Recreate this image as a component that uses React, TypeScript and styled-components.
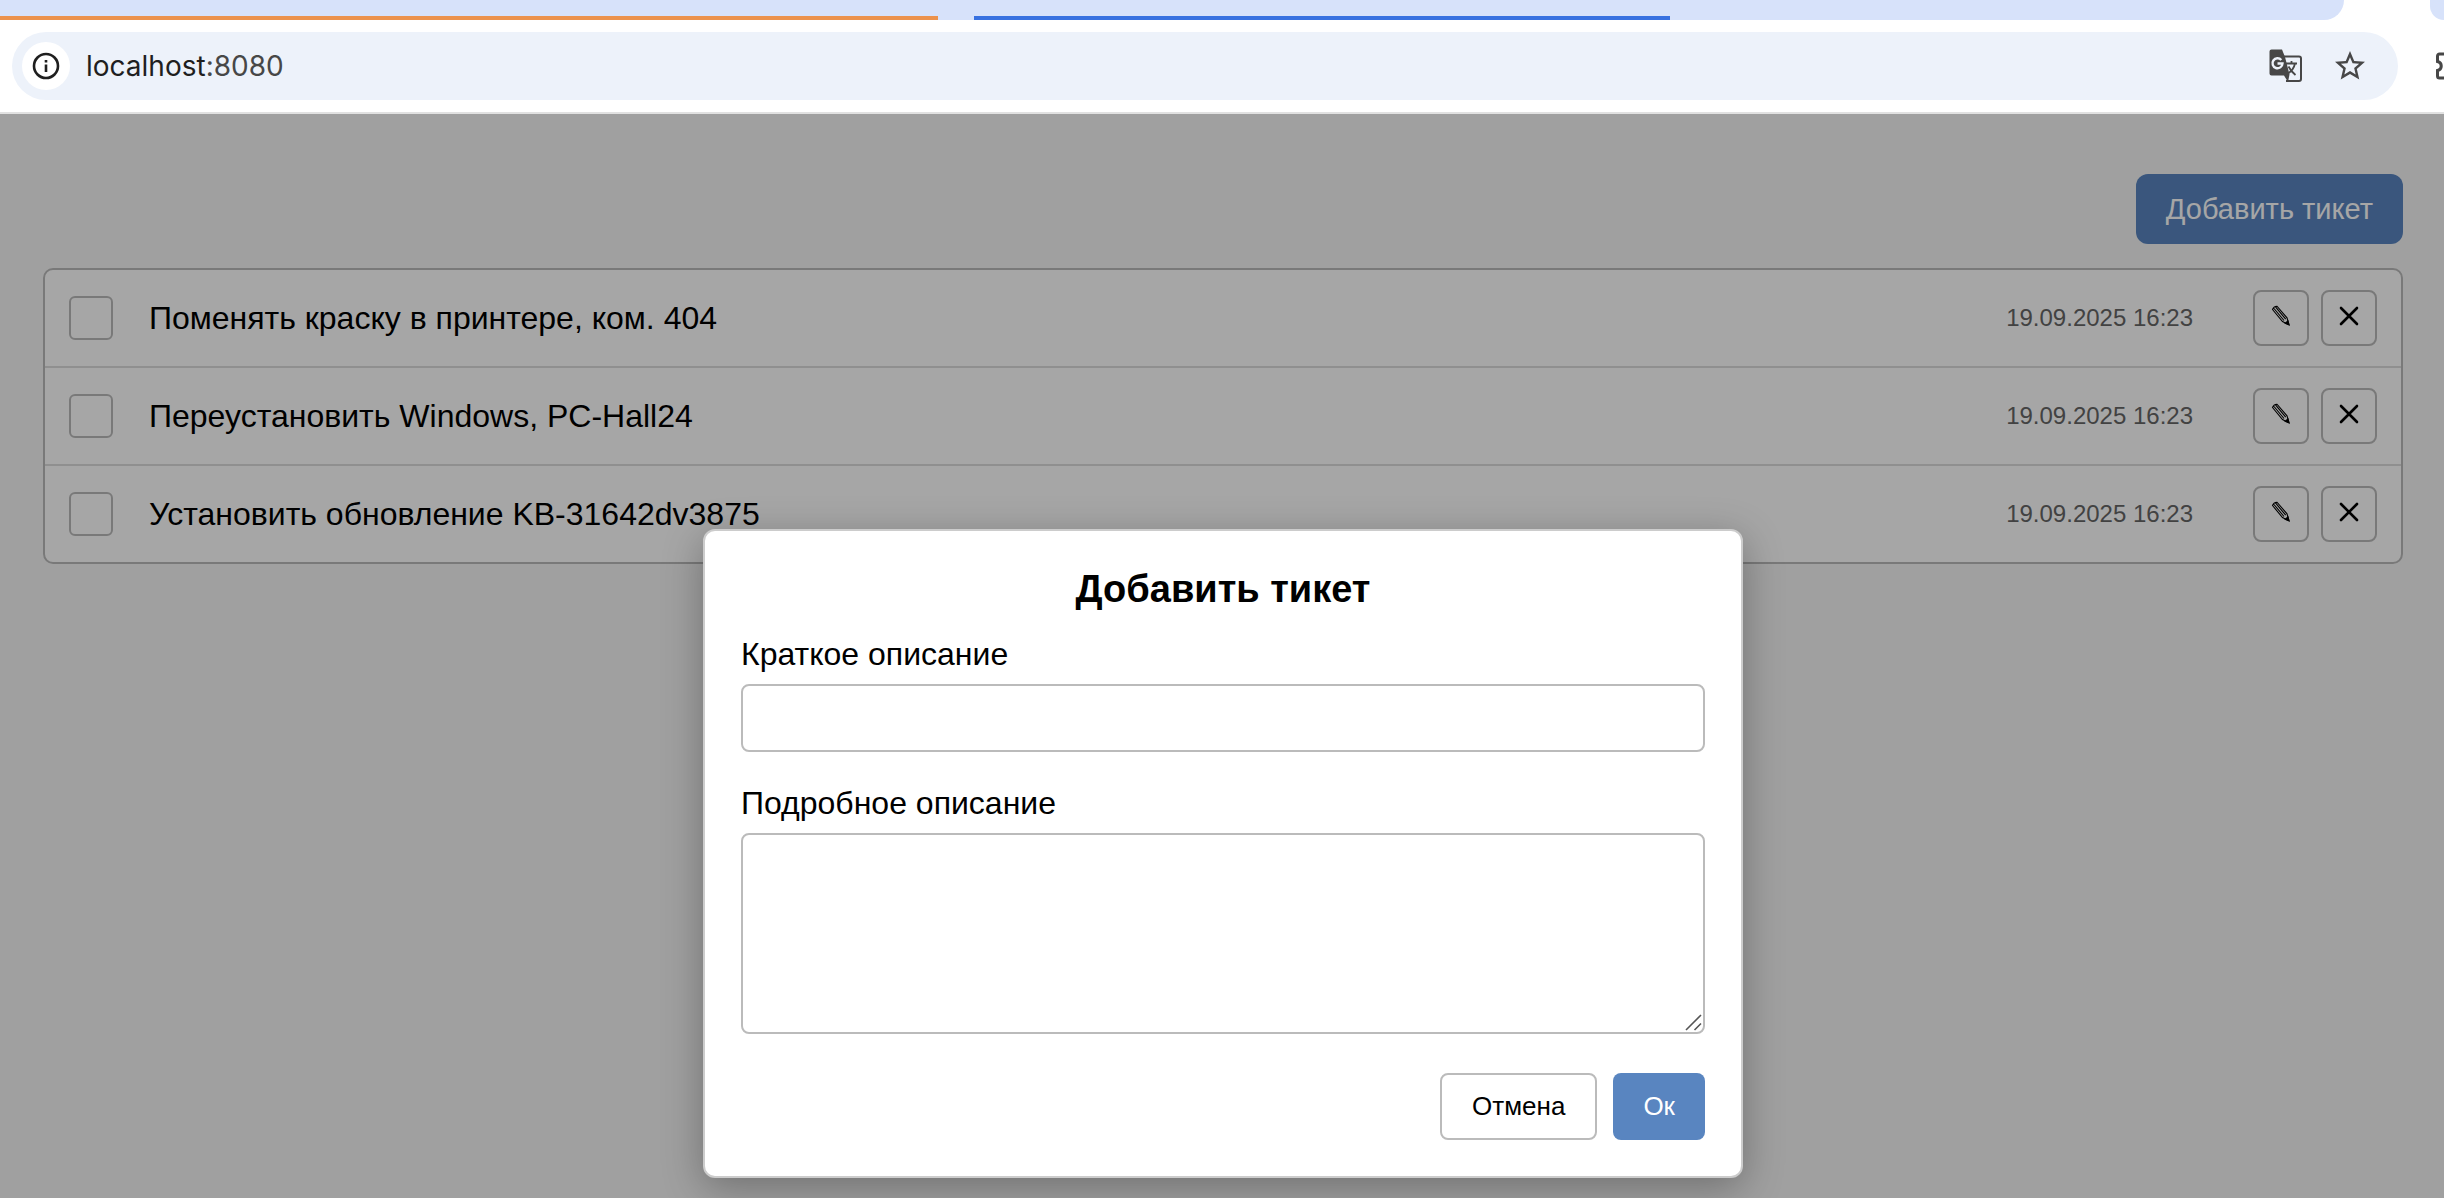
import React from "react";
import styled, { createGlobalStyle } from "styled-components";

const GlobalStyle = createGlobalStyle`
  *, *::before, *::after { box-sizing: border-box; }
  html, body, #root { height: 100%; }
  body {
    margin: 0;
    background: #fff;
    color: #000;
    font-family: "Liberation Sans", Arial, sans-serif;
    font-size: 32px;
    line-height: 36px;
  }
  button, input, textarea { font-family: inherit; margin: 0; }
`;

const Window = styled.div`
  display: flex;
  flex-direction: column;
  min-height: 100vh;
`;

const TabStrip = styled.div`
  display: flex;
  justify-content: space-between;
  height: 20px;
  overflow: hidden;
`;

const TabGroup = styled.div`
  display: flex;
  align-items: flex-end;
  gap: 36px;
  flex: 0 1 2344px;
  background: #d7e2fa;
  border-bottom-right-radius: 24px;
`;

const TabLine = styled.span<{ $color: string; $width: number }>`
  flex: 0 1 ${(p) => p.$width}px;
  height: 4px;
  background: ${(p) => p.$color};
`;

const TabEdge = styled.div`
  width: 14px;
  background: #d7e2fa;
  border-bottom-left-radius: 24px;
`;

const Toolbar = styled.header`
  display: flex;
  align-items: center;
  gap: 36px;
  height: 94px;
  padding-left: 12px;
  border-bottom: 2px solid #e1e1e1;
  overflow: hidden;
`;

const AddressBar = styled.div`
  display: flex;
  align-items: center;
  flex: 1;
  height: 68px;
  padding: 0 30px 0 10px;
  border-radius: 34px;
  background: #edf2fa;
`;

const ChromeButton = styled.button`
  display: flex;
  align-items: center;
  justify-content: center;
  width: 36px;
  height: 36px;
  padding: 0;
  border: 0;
  background: none;
  color: #474747;
`;

const InfoButton = styled(ChromeButton)`
  width: 48px;
  height: 48px;
  border-radius: 50%;
  background: #fff;
  color: #1f1f1f;
`;

const Address = styled.div`
  flex: 1;
  padding-left: 16px;
  font-family: Inter, Roboto, sans-serif;
  font-size: 28px;
  color: #1f1f1f;
`;

const Port = styled.span`
  color: #474747;
`;

const AddressActions = styled.div`
  display: flex;
  gap: 28px;
`;

const Extensions = styled.div`
  flex: 0 0 10px;
  height: 32px;
  overflow: hidden;
  color: #474747;
`;

const Page = styled.main`
  position: relative;
  flex: 1;
  padding: 60px 41px 0 43px;
  background: #f6f6f6;
`;

const Actions = styled.div`
  display: flex;
  justify-content: flex-end;
  margin-bottom: 24px;
`;

const PrimaryButton = styled.button`
  padding: 0 30px;
  border: 0;
  background: #5985c0;
  color: #fff;
  height: 67px;
  font-size: 26px;
  border-radius: 8px;
`;

const AddButton = styled(PrimaryButton)`
  height: 70px;
  font-size: 29px;
  border-radius: 12px;
`;

const TicketList = styled.ul`
  margin: 0;
  padding: 0;
  list-style: none;
  background: #fff;
  border: 2px solid #bbb;
  border-radius: 10px;
`;

const Ticket = styled.li`
  display: flex;
  align-items: center;
  padding: 20px 24px;
  & + & { border-top: 2px solid #dcdcdc; }
`;

const TicketLabel = styled.label`
  display: flex;
  align-items: center;
  gap: 36px;
  flex: 1;
`;

const Check = styled.input`
  appearance: none;
  width: 44px;
  height: 44px;
  margin: 0;
  border: 2px solid #bbb;
  border-radius: 6px;
`;

const Created = styled.time`
  margin-right: 60px;
  font-size: 24px;
  color: #666;
`;

const RowButtons = styled.div`
  display: flex;
  gap: 12px;
`;

const IconButton = styled.button`
  display: flex;
  align-items: center;
  justify-content: center;
  width: 56px;
  height: 56px;
  padding: 0 0 4px;
  border: 2px solid #bbb;
  border-radius: 8px;
  background: transparent;
  color: #000;
`;

const Overlay = styled.div`
  position: absolute;
  inset: 0;
  display: flex;
  align-items: flex-end;
  justify-content: center;
  padding: 0 0 20px 2px;
  background: rgba(0, 0, 0, 0.35);
  overflow: hidden;
`;

const Dialog = styled.form`
  display: flex;
  flex-direction: column;
  width: 1040px;
  max-width: 100%;
  padding: 36px;
  border: 2px solid #ccc;
  border-radius: 12px;
  background: #fff;
  box-shadow: 0 10px 40px rgba(0, 0, 0, 0.3);
`;

const DialogTitle = styled.h2`
  margin: 0 0 24px;
  text-align: center;
  font-size: 38px;
  line-height: 45px;
`;

const Field = styled.label`
  display: flex;
  flex-direction: column;
  gap: 12px;
  margin-bottom: 33px;
`;

const TextInput = styled.input`
  height: 68px;
  padding: 0 16px;
  border: 2px solid #bbb;
  border-radius: 8px;
  background: #fff;
  font-size: 28px;
`;

const TextBox = styled.textarea`
  display: block;
  height: 201px;
  padding: 12px 16px;
  border: 2px solid #bbb;
  border-radius: 8px;
  background: #fff;
  font-size: 28px;
  resize: none;
`;

const TextBoxFrame = styled.span`
  position: relative;
  display: flex;
  flex-direction: column;
`;

const Grip = styled.svg`
  position: absolute;
  right: 2px;
  bottom: 2px;
`;

const DialogButtons = styled.div`
  display: flex;
  justify-content: flex-end;
  gap: 16px;
  padding-top: 6px;
`;

const CancelButton = styled(PrimaryButton)`
  border: 2px solid #bbb;
  background: #fff;
  color: #000;
`;

const InfoIcon = () => (
  <svg width="28" height="28" viewBox="0 0 28 28" fill="none" stroke="currentColor" strokeWidth="2.6">
    <circle cx="14" cy="14" r="12" />
    <path d="M14 12.5V20M14 8v2.6" />
  </svg>
);

const TranslateIcon = () => (
  <svg width="36" height="36" viewBox="0 0 36 36" fill="none">
    <path d="M15 8.500H31a2 2 0 0 1 2 2V31a2 2 0 0 1-2 2H18" stroke="currentColor" strokeWidth="2" />
    <path d="M3.500 1.500h10.500L17 9l4.500 17.500-1.500 7.500-4-6.500H3.500a2 2 0 0 1-2-2V3.500a2 2 0 0 1 2-2z" fill="currentColor" />
    <path d="M13.300 12a5 5 0 1 0 1.200 3.500H9.500" stroke="#edf2fa" strokeWidth="2.400" />
    <path d="M18 15.500h11M23.500 13v2.500M27 15.500c-1 5-4 8-7 10M20.500 18.500c2 4 4 6 7 8.500" stroke="currentColor" strokeWidth="1.800" />
  </svg>
);

const StarIcon = () => (
  <svg width="36" height="36" viewBox="1 0 22 24" fill="currentColor">
    <path d="M22 9.240l-7.190-.62L12 2 9.190 8.630 2 9.240l5.460 4.730L5.820 21 12 17.270 18.180 21l-1.630-7.030L22 9.240zM12 15.400l-3.760 2.270 1-4.280-3.320-2.880 4.380-.38L12 6.100l1.710 4.040 4.380.38-3.320 2.880 1 4.280L12 15.400z" />
  </svg>
);

const PuzzleIcon = () => (
  <svg width="32" height="32" viewBox="0 0 32 32" fill="none" stroke="currentColor" strokeWidth="3">
    <path d="M14 4H5.500a2 2 0 0 0-2 2v5.500c5 1 5 8 0 9V26a2 2 0 0 0 2 2H14" />
  </svg>
);

const PencilIcon = () => (
  <svg width="20" height="22" viewBox="0 0 20 22" fill="none" stroke="currentColor" strokeWidth="1.1">
    <path d="M1.500 4.500Q2.500 1.500 6 1.200L16 12.800l2 7-6.500-3.300zM3 3.500l10 12M4.700 2.200l10 12" />
    <path d="M18.800 20.800l-5.600-2.300 4-3.700z" fill="currentColor" stroke="none" />
  </svg>
);

const CrossIcon = () => (
  <svg width="20" height="20" viewBox="0 0 20 20" stroke="currentColor" strokeWidth="2.600" strokeLinecap="round">
    <path d="M2 2l16 16M18 2L2 18" />
  </svg>
);

const tickets = [
  { id: 1, name: "Поменять краску в принтере, ком. 404", created: "19.09.2025 16:23" },
  { id: 2, name: "Переустановить Windows, PC-Hall24", created: "19.09.2025 16:23" },
  { id: 3, name: "Установить обновление KB-31642dv3875", created: "19.09.2025 16:23" },
];

export default function App() {
  return (
    <>
      <GlobalStyle />
      <Window>
        <TabStrip>
          <TabGroup>
            <TabLine $color="#ec924c" $width={938} />
            <TabLine $color="#3871e0" $width={696} />
          </TabGroup>
          <TabEdge />
        </TabStrip>
        <Toolbar>
          <AddressBar>
            <InfoButton type="button" aria-label="Site information"><InfoIcon /></InfoButton>
            <Address>localhost<Port>:8080</Port></Address>
            <AddressActions>
              <ChromeButton type="button" aria-label="Translate"><TranslateIcon /></ChromeButton>
              <ChromeButton type="button" aria-label="Bookmark"><StarIcon /></ChromeButton>
            </AddressActions>
          </AddressBar>
          <Extensions><PuzzleIcon /></Extensions>
        </Toolbar>
        <Page>
          <Actions>
            <AddButton type="button">Добавить тикет</AddButton>
          </Actions>
          <TicketList>
            {tickets.map((t) => (
              <Ticket key={t.id}>
                <TicketLabel>
                  <Check type="checkbox" />
                  {t.name}
                </TicketLabel>
                <Created>{t.created}</Created>
                <RowButtons>
                  <IconButton type="button" aria-label="Edit"><PencilIcon /></IconButton>
                  <IconButton type="button" aria-label="Delete"><CrossIcon /></IconButton>
                </RowButtons>
              </Ticket>
            ))}
          </TicketList>
          <Overlay>
            <Dialog role="dialog" aria-labelledby="dialog-title" onSubmit={(e) => e.preventDefault()}>
              <DialogTitle id="dialog-title">Добавить тикет</DialogTitle>
              <Field>
                Краткое описание
                <TextInput type="text" />
              </Field>
              <Field>
                Подробное описание
                <TextBoxFrame>
                  <TextBox />
                  <Grip width="18" height="18" viewBox="0 0 18 18" stroke="#555" strokeWidth="1.600">
                    <path d="M1 16L16 1M9.500 16L16 9.500" />
                  </Grip>
                </TextBoxFrame>
              </Field>
              <DialogButtons>
                <CancelButton type="button">Отмена</CancelButton>
                <PrimaryButton type="submit">Ок</PrimaryButton>
              </DialogButtons>
            </Dialog>
          </Overlay>
        </Page>
      </Window>
    </>
  );
}
